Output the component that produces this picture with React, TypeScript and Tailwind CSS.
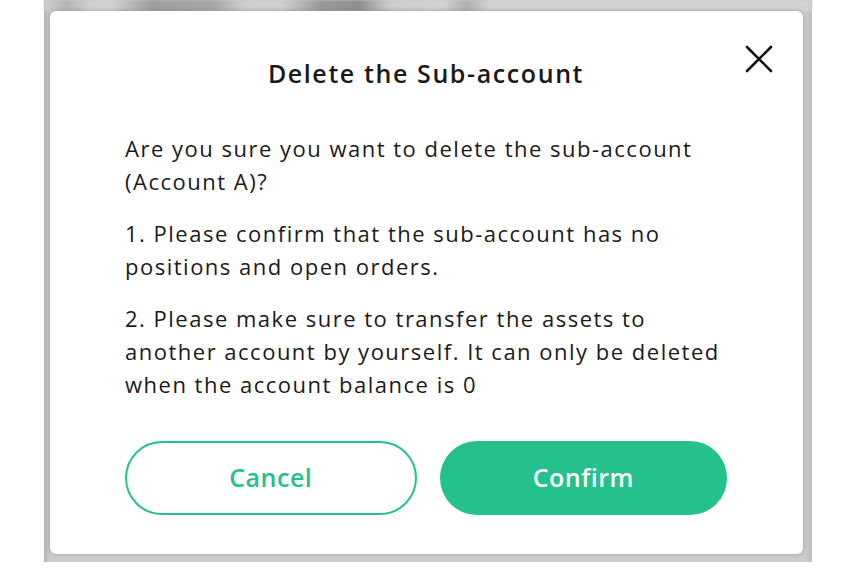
import React from 'react';

const font = { fontFamily: '"Open Sans", "Noto Sans", Arial, sans-serif' };

const CloseIcon = () => (
  <svg width="30" height="30" viewBox="0 0 30 30" fill="none" stroke="#111" strokeWidth="2.6" strokeLinecap="round">
    <path d="M3 3 L27 27 M27 3 L3 27" />
  </svg>
);

const DeleteSubAccountModal = () => {
  return (
    <div className="relative bg-white rounded-md pt-[42px] pb-[39px] pl-[75px] pr-[76px] shadow-[0_0_4px_rgba(0,0,0,0.25)]">
      <button className="absolute right-[29px] top-[33px]">
        <CloseIcon />
      </button>
      <h2 className="text-center text-[25px] leading-[40px] font-semibold tracking-[1.6px] text-[#1a1a1a]">
        Delete the Sub-account
      </h2>
      <div className="mt-[39px] text-[22px] leading-[33px] tracking-[1.5px] text-[#1a1a1a] flex flex-col gap-[19px]">
        <p>Are you sure you want to delete the sub-account (Account A)?</p>
        <p>1. Please confirm that the sub-account has no positions and open orders.</p>
        <p>2. Please make sure to transfer the assets to another account by yourself. It can only be deleted when the account balance is 0</p>
      </div>
      <div className="mt-[40px] flex gap-[23px]">
        <button className="flex-1 h-[74px] rounded-full border-2 border-[#24c18d] text-[#24c18d] text-[25px] font-semibold tracking-[0.5px]">
          Cancel
        </button>
        <button className="flex-1 h-[74px] rounded-full bg-[#24c18d] text-white text-[25px] font-semibold tracking-[0.5px]">
          Confirm
        </button>
      </div>
    </div>
  );
};

export default function App() {
  return (
    <div className="w-[844px] h-[580px] bg-white" style={font}>
      <div className="ml-[44px] w-[768px] h-[562px] flex flex-col bg-[linear-gradient(90deg,#b4b4b4_0px,#cdcdcd_6px,#cdcdcd_99%,#bdbdbd_100%)]">
        {/* blurred page peeking out above the dialog */}
        <div className="h-[11px] shrink-0 blur-[1px] bg-[linear-gradient(90deg,#cfcfcf_0%,#b5b5b5_3%,#d0d0d0_6%,#d0d0d0_9%,#9e9e9e_14%,#a6a6a6_22%,#cecece_26%,#d0d0d0_31%,#9a9a9a_36%,#8f8f8f_41%,#cccccc_45%,#d2d2d2_52%,#b0b0b0_55%,#d2d2d2_58%,#d2d2d2_100%)]" />
        <div className="pl-[6px] pr-[9px]">
          <DeleteSubAccountModal />
        </div>
      </div>
    </div>
  );
}
